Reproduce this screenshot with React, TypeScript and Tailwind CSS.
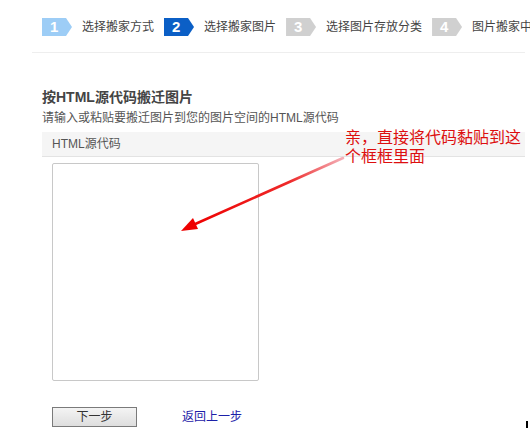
import React from 'react';

const steps = [
  { n: '1', label: '选择搬家方式', color: 'bg-[#9dcdf6]' },
  { n: '2', label: '选择搬家图片', color: 'bg-[#0b5fc6]' },
  { n: '3', label: '选择图片存放分类', color: 'bg-[#d0d0d0]' },
  { n: '4', label: '图片搬家中', color: 'bg-[#d0d0d0]' },
];

const font = "font-['Liberation_Sans','Noto_Sans_CJK_SC',sans-serif]";

const App: React.FC = () => {
  return (
    <div className={`relative w-[530px] h-[431px] overflow-hidden bg-white ${font}`}>
      {/* Steps */}
      <div className="pt-[18px] pl-[42px] flex items-center h-[36px] whitespace-nowrap">
        {steps.map((s) => (
          <div key={s.n} className="flex items-center shrink-0">
            <div
              className={`w-[30px] h-[18px] ${s.color} text-white font-bold text-[15px] leading-[18px] pl-[8px] [clip-path:polygon(0_0,80%_0,100%_50%,80%_100%,0_100%)]`}
            >
              {s.n}
            </div>
            <span className="ml-[10px] mr-[10px] text-[12px] text-[#444]">{s.label}</span>
          </div>
        ))}
      </div>
      <div className="mt-[16px] ml-[32px] w-[493px] h-px bg-[#eeeeee]" />

      {/* Content */}
      <div className="pl-[42px] pr-[5px]">
        <h2 className="mt-[34px] text-[14px] leading-[20px] font-bold text-[#444]">按HTML源代码搬迁图片</h2>
        <p className="mt-[3px] text-[12px] leading-[16px] text-[#555]">
          请输入或粘贴要搬迁图片到您的图片空间的HTML源代码
        </p>
        <div className="mt-[6px] h-[25px] bg-[#f5f5f5] border-b border-[#e3e3e3] pl-[10px] text-[12px] leading-[24px] text-[#555]">
          HTML源代码
        </div>
        <textarea className="block mt-[6px] ml-[10px] w-[207px] h-[218px] border border-[#c8c8c8] rounded-[2px] resize-none outline-none" />
        <div className="mt-[26px] ml-[10px] flex items-center">
          <button className="w-[85px] h-[20px] border border-[#7a7a7a] bg-gradient-to-b from-[#f4f4f4] to-[#dedede] text-[12px] leading-[18px] text-[#333]">
            下一步
          </button>
          <a className="ml-[45px] text-[12px] text-[#1c20a8]">返回上一步</a>
        </div>
      </div>

      {/* Annotation */}
      <div className="absolute left-[345px] top-[128px] text-[16px] leading-[19px] text-[#dd0f0f] whitespace-nowrap">
        亲，直接将代码黏贴到这
        <br />
        个框框里面
      </div>
      <svg className="absolute left-0 top-0" width="530" height="431">
        <defs>
          <linearGradient id="arrowFade" x1="343" y1="158" x2="190" y2="226" gradientUnits="userSpaceOnUse">
            <stop offset="0" stopColor="#f4b0b8" />
            <stop offset="0.35" stopColor="#ee2a2a" />
            <stop offset="1" stopColor="#ee0000" />
          </linearGradient>
        </defs>
        <line x1="343" y1="158" x2="193" y2="225" stroke="url(#arrowFade)" strokeWidth="2.6" strokeLinecap="round" />
        <polygon points="181,231 193,218 198,229" fill="#ee0000" />
      </svg>
      <div className="absolute left-[526px] top-[421px] w-[2px] h-[7px] bg-black" />
    </div>
  );
};

export default App;
